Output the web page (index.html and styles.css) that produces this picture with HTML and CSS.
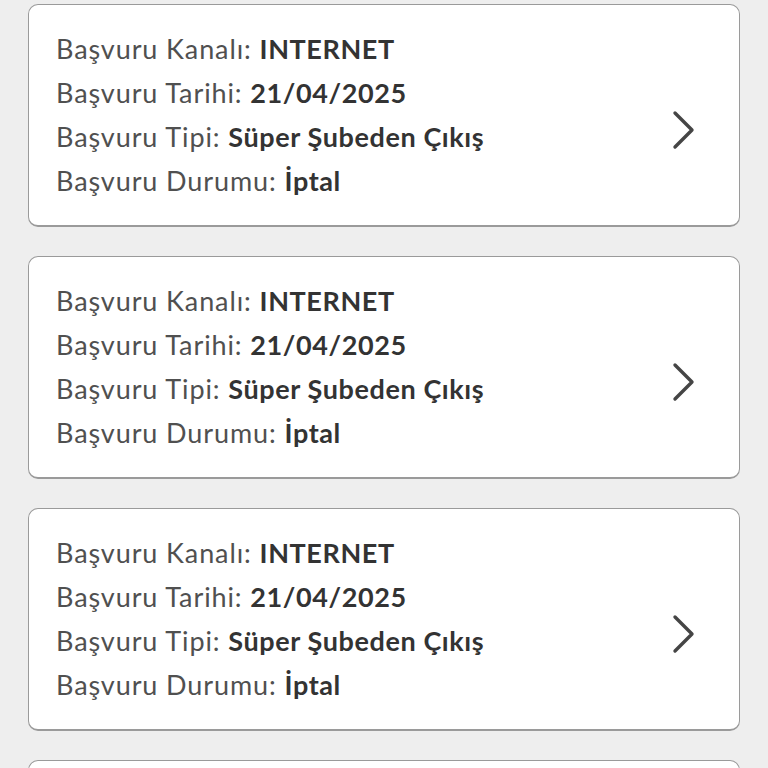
FILE: index.html
```html
<!DOCTYPE html>
<html lang="tr">
<head>
    <meta charset="UTF-8">
    <meta name="viewport" content="width=device-width, initial-scale=1.0">
    <title>Başvurularım</title>
    <link rel="stylesheet" href="styles.css">
</head>
<body>
    <div class="list">
        <div class="card">
            <div class="info">
                <div class="row">Başvuru Kanalı: <b>INTERNET</b></div>
                <div class="row">Başvuru Tarihi: <b>21/04/2025</b></div>
                <div class="row">Başvuru Tipi: <b>Süper Şubeden Çıkış</b></div>
                <div class="row">Başvuru Durumu: <b>İptal</b></div>
            </div>
            <svg class="chevron" width="26" height="40" viewBox="0 0 26 40">
                <path d="M4 3 L21 20 L4 37" fill="none" stroke="#454545" stroke-width="3.4" stroke-linecap="round" stroke-linejoin="round"/>
            </svg>
        </div>

        <div class="card">
            <div class="info">
                <div class="row">Başvuru Kanalı: <b>INTERNET</b></div>
                <div class="row">Başvuru Tarihi: <b>21/04/2025</b></div>
                <div class="row">Başvuru Tipi: <b>Süper Şubeden Çıkış</b></div>
                <div class="row">Başvuru Durumu: <b>İptal</b></div>
            </div>
            <svg class="chevron" width="26" height="40" viewBox="0 0 26 40">
                <path d="M4 3 L21 20 L4 37" fill="none" stroke="#454545" stroke-width="3.4" stroke-linecap="round" stroke-linejoin="round"/>
            </svg>
        </div>

        <div class="card">
            <div class="info">
                <div class="row">Başvuru Kanalı: <b>INTERNET</b></div>
                <div class="row">Başvuru Tarihi: <b>21/04/2025</b></div>
                <div class="row">Başvuru Tipi: <b>Süper Şubeden Çıkış</b></div>
                <div class="row">Başvuru Durumu: <b>İptal</b></div>
            </div>
            <svg class="chevron" width="26" height="40" viewBox="0 0 26 40">
                <path d="M4 3 L21 20 L4 37" fill="none" stroke="#454545" stroke-width="3.4" stroke-linecap="round" stroke-linejoin="round"/>
            </svg>
        </div>

        <!-- sonraki kart, ekranın altında başlıyor -->
        <div class="card card-next"></div>
    </div>
</body>
</html>
```

FILE: styles.css
```css
body {
    margin: 0;
    background: #eeeeee;
    font-family: Lato, "Open Sans", sans-serif;
    color: #505050;
    overflow: hidden;
}

.list {
    padding: 4px 0 0 28px;
    width: 712px;
}

.card {
    display: flex;
    align-items: center;
    background: #fff;
    border: 1.5px solid #9a9a9a;
    border-bottom-width: 2px;
    border-radius: 10px;
    height: 223px;
    box-sizing: border-box;
    padding: 0 42px 0 27px;
    margin-bottom: 29px;
}

.info {
    flex: 1;
}

.row {
    font-size: 27px;
    line-height: 44px;
    letter-spacing: 0.9px;
    white-space: nowrap;
}

.row b {
    color: #333;
    font-weight: 700;
    letter-spacing: 0.6px;
}

.chevron {
    margin-top: 30px;
}
```
